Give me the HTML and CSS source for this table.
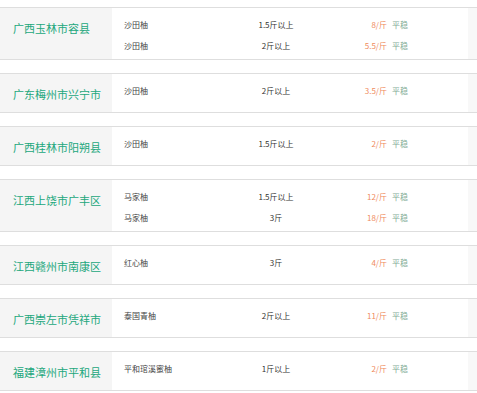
FILE: index.html
```html
<!DOCTYPE html>
<html lang="zh-CN">
<head>
<meta charset="utf-8">
<title>柚子行情</title>
<link rel="stylesheet" href="styles.css">
</head>
<body>
<div class="list">
  <div class="card">
    <div class="place">广西玉林市容县</div>
    <div class="rows">
      <div class="row"><span class="prod">沙田柚</span><span class="spec">1.5斤以上</span><span class="price"><span class="num">8/斤</span><span class="trend">平稳</span></span></div>
      <div class="row"><span class="prod">沙田柚</span><span class="spec">2斤以上</span><span class="price"><span class="num">5.5/斤</span><span class="trend">平稳</span></span></div>
    </div>
    <div class="side"></div>
  </div>
  <div class="card">
    <div class="place">广东梅州市兴宁市</div>
    <div class="rows">
      <div class="row"><span class="prod">沙田柚</span><span class="spec">2斤以上</span><span class="price"><span class="num">3.5/斤</span><span class="trend">平稳</span></span></div>
    </div>
    <div class="side"></div>
  </div>
  <div class="card">
    <div class="place">广西桂林市阳朔县</div>
    <div class="rows">
      <div class="row"><span class="prod">沙田柚</span><span class="spec">1.5斤以上</span><span class="price"><span class="num">2/斤</span><span class="trend">平稳</span></span></div>
    </div>
    <div class="side"></div>
  </div>
  <div class="card">
    <div class="place">江西上饶市广丰区</div>
    <div class="rows">
      <div class="row"><span class="prod">马家柚</span><span class="spec">1.5斤以上</span><span class="price"><span class="num">12/斤</span><span class="trend">平稳</span></span></div>
      <div class="row"><span class="prod">马家柚</span><span class="spec">3斤</span><span class="price"><span class="num">18/斤</span><span class="trend">平稳</span></span></div>
    </div>
    <div class="side"></div>
  </div>
  <div class="card">
    <div class="place">江西赣州市南康区</div>
    <div class="rows">
      <div class="row"><span class="prod">红心柚</span><span class="spec">3斤</span><span class="price"><span class="num">4/斤</span><span class="trend">平稳</span></span></div>
    </div>
    <div class="side"></div>
  </div>
  <div class="card">
    <div class="place">广西崇左市凭祥市</div>
    <div class="rows">
      <div class="row"><span class="prod">泰国青柚</span><span class="spec">2斤以上</span><span class="price"><span class="num">11/斤</span><span class="trend">平稳</span></span></div>
    </div>
    <div class="side"></div>
  </div>
  <div class="card">
    <div class="place">福建漳州市平和县</div>
    <div class="rows">
      <div class="row"><span class="prod">平和琯溪蜜柚</span><span class="spec">1斤以上</span><span class="price"><span class="num">2/斤</span><span class="trend">平稳</span></span></div>
    </div>
    <div class="side"></div>
  </div>
</div>
</body>
</html>
```
FILE: styles.css
```css
html, body {
  margin: 0;
  padding: 0;
  background: #ffffff;
  overflow: hidden;
}

body {
  font-family: "Noto Sans CJK SC", "Noto Sans", sans-serif;
  color: #333333;
}

.list {
  display: flex;
  flex-direction: column;
  gap: 13px;
  padding-top: 7px;
  width: 477px;
}

.card {
  display: flex;
  align-items: stretch;
  border-top: 1px solid #dedede;
  border-bottom: 1px solid #dedede;
  min-height: 38px;
}

.place {
  width: 99px;
  flex: none;
  background: #f5f5f5;
  color: #22a77c;
  font-size: 11px;
  line-height: 15px;
  padding: 13px 0 0 13px;
  white-space: nowrap;
}

.rows {
  width: 344px;
  flex: none;
  padding: 6px 0 3px 12px;
  display: flex;
  flex-direction: column;
}

.row {
  display: grid;
  grid-template-columns: 100px 104px 80px;
  height: 21px;
  align-items: center;
  font-size: 8px;
  line-height: 21px;
  white-space: nowrap;
}

.prod {
  color: #444444;
}

.spec {
  text-align: center;
  color: #333333;
}

.price {
  text-align: right;
}

.num {
  color: #ef8a5c;
}

.trend {
  color: #7fab95;
  margin-left: 5px;
}

.side {
  flex: 1;
  background: #f8f8f8;
}
```
